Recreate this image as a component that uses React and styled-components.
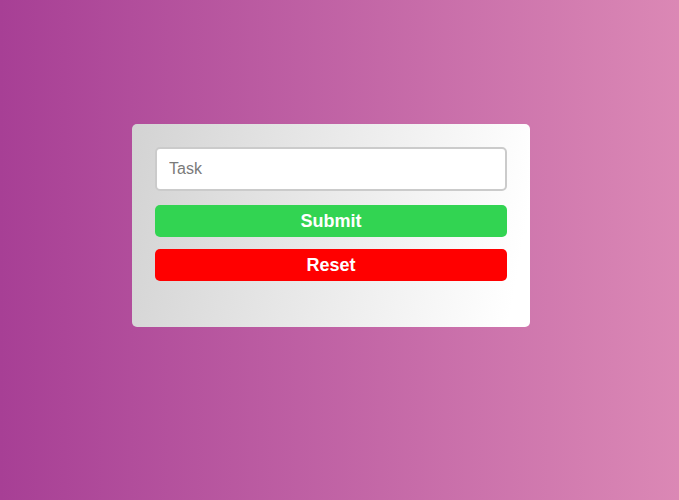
import React from "react";
import styled, { createGlobalStyle } from "styled-components";

const Global = createGlobalStyle`
  html, body { margin: 0; padding: 0; }
  body {
    min-height: 500px;
    background: linear-gradient(90deg, #a73f95 0%, #db88b5 100%);
    font-family: "Liberation Sans", Arial, sans-serif;
  }
`;

const Page = styled.div`
  min-height: 500px;
  box-sizing: border-box;
  padding: 124px 0 0 132px;
`;

const Card = styled.form`
  width: 398px;
  box-sizing: border-box;
  padding: 23px 23px 46px;
  border-radius: 5px;
  background: linear-gradient(100deg, #d3d3d3 0%, #e6e6e6 40%, #ffffff 95%);
  display: flex;
  flex-direction: column;
`;

const Input = styled.input`
  height: 44px;
  box-sizing: border-box;
  border: 2px solid #cbcbcb;
  border-radius: 5px;
  background: #fff;
  padding: 0 12px;
  font-family: "Liberation Sans", Arial, sans-serif;
  font-size: 16px;
  color: #333;
  outline: none;
  &::placeholder { color: #7a7a7a; }
`;

const Button = styled.button`
  height: 32px;
  margin-top: ${(p) => p.$gap}px;
  border: none;
  border-radius: 5px;
  background: ${(p) => p.$bg};
  color: #fff;
  font-family: "Liberation Sans", Arial, sans-serif;
  font-weight: bold;
  font-size: 18px;
  padding: 0;
  cursor: pointer;
`;

export default function App() {
  return (
    <>
      <Global />
      <Page>
        <Card onSubmit={(e) => e.preventDefault()}>
          <Input placeholder="Task" />
          <Button type="submit" $bg="#32d452" $gap={14}>Submit</Button>
          <Button type="reset" $bg="#ff0000" $gap={12}>Reset</Button>
        </Card>
      </Page>
    </>
  );
}
